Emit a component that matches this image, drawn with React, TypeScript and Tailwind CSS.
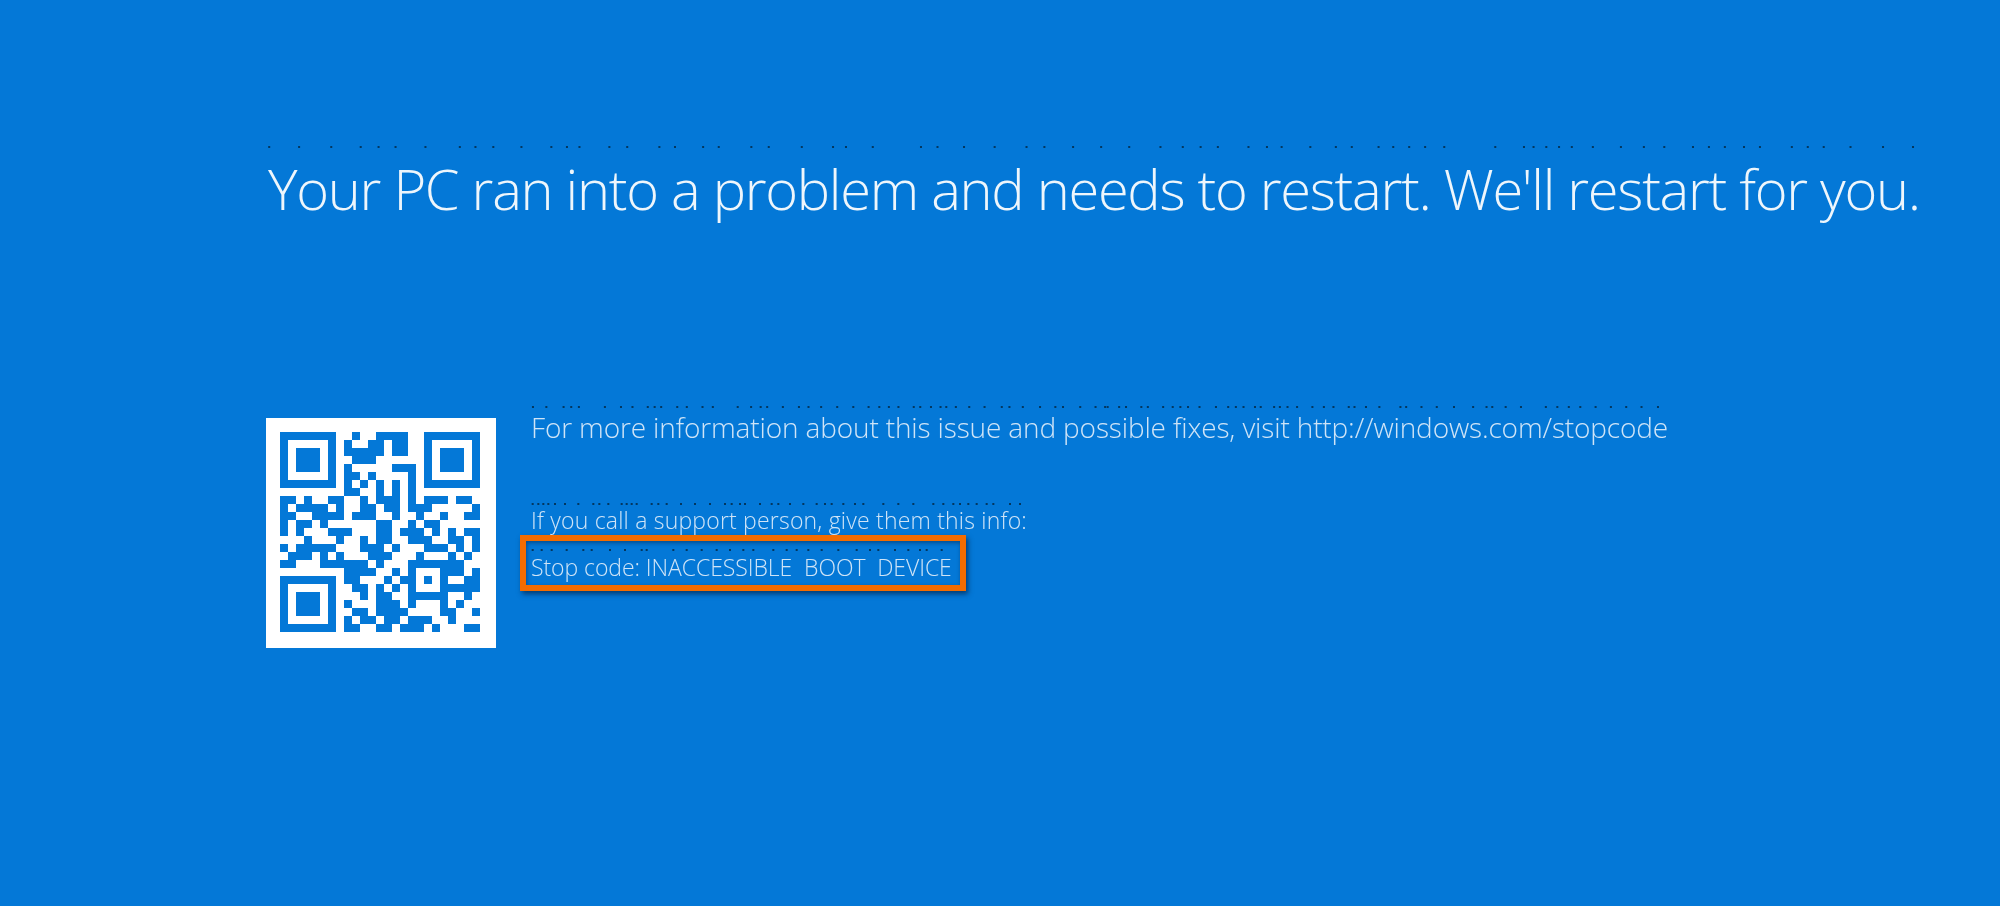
// Blue screen stop page
const qrRows: number[][] = [
  [9, 12, 13, 14, 15],
  [8, 11, 12, 14, 15],
  [8, 9, 10, 11, 12, 14, 15],
  [9, 10, 11],
  [8, 14, 15, 16],
  [8, 9, 11, 16],
  [8, 10, 12, 14, 16],
  [8, 9, 12, 14, 16],
  [0, 1, 3, 6, 7, 10, 12, 13, 14, 16, 18, 19, 20, 22, 23],
  [0, 2, 3, 4, 5, 7, 10, 11, 13, 14, 16, 17, 18, 24],
  [0, 1, 4, 5, 6, 7, 9, 10, 11, 14, 17, 20, 23, 24],
  [0, 2, 3, 5, 12, 13, 16, 18, 19],
  [0, 2, 6, 7, 8, 12, 13, 15, 16, 17, 19, 21, 23, 24],
  [3, 7, 10, 12, 13, 16, 17, 18, 21, 22, 24],
  [0, 2, 3, 4, 5, 6, 10, 11, 12, 14, 18, 19, 20, 22, 24],
  [1, 2, 3, 5, 7, 11, 12, 13, 17, 21, 23],
  [0, 1, 5, 6, 7, 8, 9, 10, 12, 16, 17, 18, 19, 20, 21, 22],
  [8, 9, 10, 11, 14, 16, 20, 21, 22, 24],
  [8, 9, 13, 15, 16, 18, 20, 23, 24],
  [9, 10, 12, 14, 16, 20, 21, 22, 23, 24],
  [10, 12, 13, 16, 17, 18, 19, 20, 23],
  [8, 12, 13, 14, 16, 20, 22],
  [9, 10, 12, 13, 14, 15, 20, 21, 24],
  [8, 10, 11, 13, 14, 16, 17, 18, 21],
  [8, 9, 12, 13, 15, 16, 17, 19, 23, 24],
];

function Finder({ x, y }: { x: number; y: number }) {
  return (
    <g>
      <path
        fillRule="evenodd"
        d={`M${x} ${y}h7v7h-7zM${x + 1} ${y + 1}v5h5v-5z`}
      />
      <rect x={x + 2} y={y + 2} width={3} height={3} />
    </g>
  );
}

function QrCode() {
  return (
    <div className="h-[230px] w-[230px] shrink-0 bg-white pl-[14px] pt-[14px]">
      <svg viewBox="0 0 25 25" className="h-[200px] w-[200px] fill-[#0478d7] blur-[0.4px]" shapeRendering="crispEdges">
        <Finder x={0} y={0} />
        <Finder x={18} y={0} />
        <Finder x={0} y={18} />
        {qrRows.map((cols, r) =>
          cols.map((c) => <rect key={`${r}-${c}`} x={c} y={r} width={1} height={1} />)
        )}
      </svg>
    </div>
  );
}

// the row of stray specks that sits above every line of text
function Specks({ width, points }: { width: number; points: number[] }) {
  return (
    <svg width={width} height={3} className="block overflow-visible">
      {points.map((x, i) => (
        <rect key={i} x={x - 1} y={0} width={2} height={2} fill="#04375f" />
      ))}
    </svg>
  );
}

const scaled = (xs: number[], scale: number, offset: number) => xs.map((x) => x / scale + offset);

const titleSpecks = [
  ...scaled([43, 110, 182, 248, 288, 326, 393, 470, 505, 545, 608, 675, 710, 738, 805, 845, 917, 952, 1015, 1050, 1123, 1162, 1236, 1306, 1335, 1395, 1503, 1540], 2.24, -16),
  ...scaled([22, 70, 120, 148, 193, 237, 281, 330, 365, 393, 420, 468, 497, 520, 565, 605, 630, 672, 695, 720, 745, 775, 855, 900, 915, 935, 955, 975, 1008, 1052, 1088, 1120, 1165, 1190, 1215, 1245, 1270, 1320, 1345, 1370, 1412, 1463, 1510], 1.568, 684),
];
const infoSpecks = [
  ...scaled([60, 95, 140, 160, 180, 248, 290, 320, 360, 378, 395, 437, 462, 503, 530, 595, 630, 655, 672, 713, 755, 780, 813, 855, 897, 937, 965, 990, 1015, 1055, 1072, 1100, 1125, 1140, 1165, 1200, 1240, 1285, 1305, 1340, 1385, 1425, 1445, 1490, 1530, 1555], 2.613, -20),
  ...scaled([20, 50, 68, 108, 125, 165, 190, 210, 230, 260, 303, 335, 355, 375, 405, 420, 455, 470, 490, 515, 555, 585, 610, 650, 665, 695, 730, 785, 800, 840, 880, 925, 975, 1010, 1025, 1060, 1100, 1165, 1195, 1225, 1255, 1295, 1335, 1375, 1415, 1458], 2.613, 570),
];
const supportSpecks = scaled([68, 85, 100, 115, 135, 165, 205, 250, 268, 295, 335, 350, 365, 380, 425, 445, 470, 513, 555, 600, 645, 665, 690, 705, 750, 785, 805, 840, 880, 920, 945, 965, 1000, 1035, 1060, 1120, 1165, 1210, 1270, 1300, 1330, 1350, 1375, 1400, 1430, 1450, 1500, 1530], 3, -20);
const stopSpecks = scaled([68, 95, 125, 170, 220, 245, 300, 345, 395, 410, 490, 530, 575, 620, 660, 700, 730, 790, 830, 860, 895, 935, 985, 1040, 1080, 1105, 1155, 1195, 1230, 1250, 1295], 3, -20);

export default function App() {
  return (
    <div className="h-[906px] w-[2000px] overflow-hidden bg-[#0478d7] pl-[266px] pt-[146px] font-['Open_Sans',sans-serif]">
      <Specks width={1660} points={titleSpecks} />
      <h1 className="ml-[2px] mt-[1px] whitespace-nowrap text-[56px] font-light leading-[76px] tracking-[-1.28px] text-[#eef6fc] blur-[0.3px]">
        Your PC ran into a problem and needs to restart. We'll restart for you.
      </h1>

      <div className="mt-[192px] flex items-start gap-[34px]">
        <QrCode />
        <div className="-mt-[12px] text-[#cfe4f7] blur-[0.4px]">
          <Specks width={1140} points={infoSpecks} />
          <p className="ml-[1px] whitespace-nowrap text-[28px] font-light leading-[36px] tracking-[-0.14px]">
            For more information about this issue and possible fixes, visit http://windows.com/stopcode
          </p>
          <div className="mt-[58px]">
            <Specks width={500} points={supportSpecks} />
            <p className="ml-[1px] -mt-[1px] whitespace-nowrap text-[23px] font-light leading-[30px] tracking-[0.2px]">
              If you call a support person, give them this info:
            </p>
          </div>
          <div className="-ml-[10px] h-[56px] w-[446px] border-[6px] border-[#f36c00] pl-[4px] pt-[8px] shadow-[2px_3px_5px_rgba(3,40,80,0.75),inset_1px_2px_4px_rgba(3,40,80,0.55)]">
            <Specks width={430} points={stopSpecks} />
            <p className="ml-[1px] whitespace-pre text-[23px] font-light leading-[30px] tracking-[-0.07px]">
              {"Stop code: INACCESSIBLE  BOOT  DEVICE"}
            </p>
          </div>
        </div>
      </div>
    </div>
  );
}
